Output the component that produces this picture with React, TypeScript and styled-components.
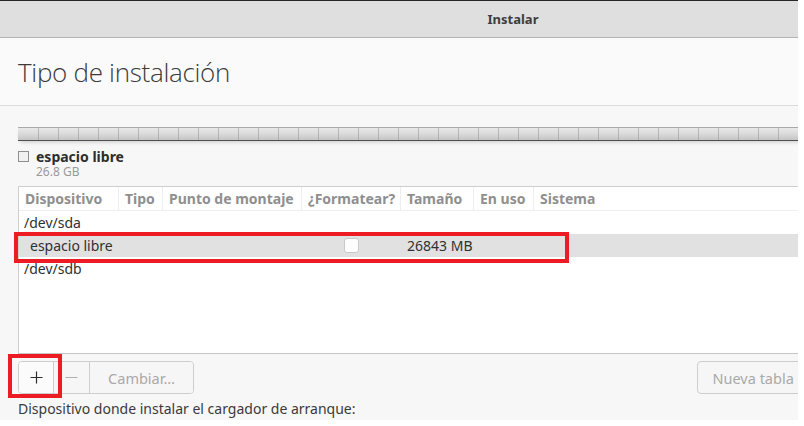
import React from "react";
import styled, { createGlobalStyle } from "styled-components";

const Global = createGlobalStyle`
  html, body { margin: 0; padding: 0; background: #ffffff; }
  body { font-family: "Noto Sans", "Open Sans", sans-serif; color: #3c3c3c; }
`;

const Frame = styled.div`
  position: relative;
  width: 798px;
  height: 420px;
  overflow: hidden;
`;

const Window = styled.div`
  width: 1026px;
  height: 420px;
  display: flex;
  flex-direction: column;
  background: #f7f7f7;
  border-top: 1px solid #262626;
`;

const TitleBar = styled.div`
  height: 36px;
  flex: none;
  display: flex;
  align-items: center;
  justify-content: center;
  background: #dfdfdf;
  border-bottom: 1px solid #b4b4b4;
  font-size: 13px;
  font-weight: 700;
  color: #3d3d3d;
`;

const Header = styled.div`
  height: 67px;
  flex: none;
  display: flex;
  align-items: center;
  padding: 0 18px;
  background: #fafafa;
  border-bottom: 1px solid #dcdcdc;
`;

const PageTitle = styled.h1`
  margin: 0;
  font-family: "Open Sans", "Noto Sans", sans-serif;
  font-size: 26px;
  font-weight: 300;
  color: #3a3a3a;
  letter-spacing: -0.3px;
`;

const Main = styled.div`
  flex: 1;
  display: flex;
  flex-direction: column;
  padding: 21px 18px 0;
`;

const PartBar = styled.div`
  height: 12px;
  flex: none;
  border-top: 1px solid #a9a9a9;
  border-bottom: 1px solid #4f4f4f;
  background:
    repeating-linear-gradient(90deg, transparent 0, transparent 19px, rgba(150,150,150,0.55) 19px, rgba(150,150,150,0.55) 20px),
    linear-gradient(#e9e9e9, #dadada 50%, #c4c4c4);
  background-position: 1px 0, 0 0;
  box-shadow: 0 3px 4px -2px rgba(0,0,0,0.18);
`;

const Legend = styled.div`
  display: grid;
  grid-template-columns: 11px auto;
  column-gap: 7px;
  row-gap: 1px;
  align-items: center;
  margin-top: 8px;
`;

const LegendSwatch = styled.span`
  width: 11px;
  height: 11px;
  box-sizing: border-box;
  border: 1px solid #8f8f8f;
  background: #f1f1f1;
`;

const LegendName = styled.span`
  font-size: 14px;
  font-weight: 700;
  color: #2e2e2e;
  line-height: 15px;
`;

const LegendSize = styled.span`
  grid-column: 2;
  font-size: 12px;
  color: #9a9a9a;
  line-height: 14px;
`;

const Table = styled.div`
  margin-top: 7px;
  height: 166px;
  background: #ffffff;
  border: 1px solid #cfcfcf;
  border-bottom-color: #c6c6c6;
  flex: none;
`;

const cols = "100px 44px 139px 99px 73px 60px 1fr";

const HeadRow = styled.div`
  display: grid;
  grid-template-columns: ${cols};
  height: 23px;
  border-bottom: 1px solid #efefef;
`;

const HeadCell = styled.div<{ $last?: boolean }>`
  display: flex;
  align-items: center;
  padding-left: 6px;
  font-size: 14px;
  font-weight: 700;
  color: #8f8f8f;
  border-right: ${(p) => (p.$last ? "none" : "1px solid #ededed")};
  white-space: nowrap;
  overflow: hidden;
`;

const Row = styled.div<{ $selected?: boolean }>`
  display: grid;
  grid-template-columns: ${cols};
  height: 23px;
  align-items: center;
  background: ${(p) => (p.$selected ? "#e1e1e1" : "transparent")};
  font-size: 14px;
  color: #303030;
`;

const Cell = styled.div<{ $indent?: number; $center?: boolean }>`
  padding-left: ${(p) => p.$indent ?? 6}px;
  display: flex;
  justify-content: ${(p) => (p.$center ? "center" : "flex-start")};
  white-space: nowrap;
`;

const Device = styled.div`
  grid-column: 1 / -1;
  padding-left: 5px;
`;

const CheckBox = styled.span`
  width: 15px;
  height: 15px;
  box-sizing: border-box;
  border: 1px solid #c9c9c9;
  border-radius: 3px;
  background: #fdfdfd;
  margin-left: -6px;
`;

const ButtonRow = styled.div`
  display: flex;
  align-items: center;
  margin-top: 7px;
`;

const Linked = styled.div`
  display: flex;
  border: 1px solid #cdcdcd;
  border-radius: 4px;
  overflow: hidden;
  height: 31px;
`;

const LinkedBtn = styled.div<{ $w: number; $active?: boolean; $sep?: boolean }>`
  width: ${(p) => p.$w}px;
  display: flex;
  align-items: center;
  justify-content: center;
  background: ${(p) => (p.$active ? "#fbfbfb" : "#f6f6f6")};
  color: ${(p) => (p.$active ? "#2e2e2e" : "#a9a9a9")};
  border-left: ${(p) => (p.$sep ? "1px solid #cdcdcd" : "none")};
  font-size: 14.5px;
`;

const Spacer = styled.div`
  flex: 1;
`;

const PlainBtn = styled.div<{ $w: number }>`
  width: ${(p) => p.$w}px;
  height: 31px;
  margin-left: 6px;
  display: flex;
  align-items: center;
  justify-content: center;
  border: 1px solid #cdcdcd;
  border-radius: 4px;
  background: #f6f6f6;
  color: #a9a9a9;
  font-size: 14.5px;
  white-space: nowrap;
`;

const BootLabel = styled.div`
  margin-top: 5px;
  font-size: 14px;
  color: #3a3a3a;
`;

const Mark = styled.div`
  position: absolute;
  box-sizing: border-box;
  border: 4px solid #ed1c24;
`;

export default function App() {
  return (
    <>
      <Global />
      <Frame>
        <Window>
          <TitleBar>Instalar</TitleBar>
          <Header>
            <PageTitle>Tipo de instalación</PageTitle>
          </Header>
          <Main>
            <PartBar />
            <Legend>
              <LegendSwatch />
              <LegendName>espacio libre</LegendName>
              <LegendSize>26.8 GB</LegendSize>
            </Legend>
            <Table>
              <HeadRow>
                <HeadCell>Dispositivo</HeadCell>
                <HeadCell>Tipo</HeadCell>
                <HeadCell>Punto de montaje</HeadCell>
                <HeadCell>¿Formatear?</HeadCell>
                <HeadCell>Tamaño</HeadCell>
                <HeadCell>En uso</HeadCell>
                <HeadCell $last>Sistema</HeadCell>
              </HeadRow>
              <Row>
                <Device>/dev/sda</Device>
              </Row>
              <Row $selected>
                <Cell $indent={11}>espacio libre</Cell>
                <Cell />
                <Cell />
                <Cell $center>
                  <CheckBox />
                </Cell>
                <Cell>26843 MB</Cell>
                <Cell />
                <Cell />
              </Row>
              <Row>
                <Device>/dev/sdb</Device>
              </Row>
            </Table>
            <ButtonRow>
              <Linked>
                <LinkedBtn $w={34} $active>
                  <svg width="13" height="13" viewBox="0 0 13 13">
                    <path d="M6.5 0.5v12M0.5 6.5h12" stroke="#2e2e2e" strokeWidth="1.2" fill="none" />
                  </svg>
                </LinkedBtn>
                <LinkedBtn $w={35} $sep>
                  <svg width="13" height="13" viewBox="0 0 13 13">
                    <path d="M0.5 6.5h12" stroke="#b0b0b0" strokeWidth="1.2" fill="none" />
                  </svg>
                </LinkedBtn>
                <LinkedBtn $w={103} $sep>Cambiar…</LinkedBtn>
              </Linked>
              <Spacer />
              <PlainBtn $w={222}>Nueva tabla de particiones…</PlainBtn>
              <PlainBtn $w={79}>Revertir</PlainBtn>
            </ButtonRow>
            <BootLabel>Dispositivo donde instalar el cargador de arranque:</BootLabel>
          </Main>
        </Window>
        <Mark style={{ left: 14, top: 232, width: 555, height: 31 }} />
        <Mark style={{ left: 8, top: 354, width: 54, height: 44 }} />
      </Frame>
    </>
  );
}
